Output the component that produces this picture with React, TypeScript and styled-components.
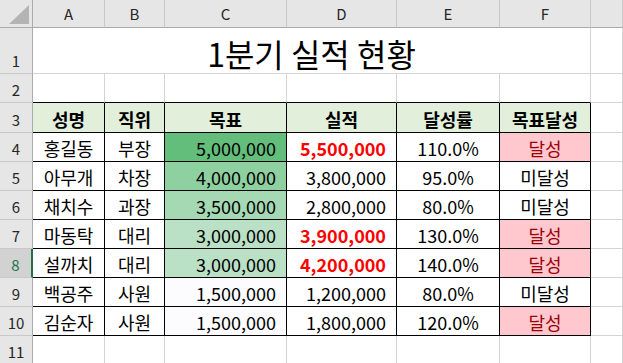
import React from 'react'
import styled, { createGlobalStyle } from 'styled-components'

const GlobalStyle = createGlobalStyle`
  html, body {
    margin: 0;
    padding: 0;
    background: #ffffff;
    overflow: hidden;
  }
  body {
    font-family: "Noto Sans CJK KR", "Noto Sans", sans-serif;
  }
`

const GRID = '#d4d4d4'
const HEAD_LINE = '#ababab'
const INK = '#000000'

const Sheet = styled.div`
  display: grid;
  grid-template-columns: 33px 72px 60px 122px 110px 103px 91px 1fr;
  grid-template-rows: 28px 46px 29px 30px repeat(7, 29px) 29px;
  width: 623px;
  height: 363px;
  overflow: hidden;
  font-family: "Noto Sans CJK KR", sans-serif;
`

const Corner = styled.div`
  background: #e6e6e6;
  border-right: 1px solid ${HEAD_LINE};
  border-bottom: 1px solid ${HEAD_LINE};
  box-sizing: border-box;
  display: flex;
  align-items: flex-end;
  justify-content: flex-end;
  padding: 0 3px 3px 0;
`

const ColHead = styled.div`
  background: #e6e6e6;
  border-right: 1px solid #c8c8c8;
  border-bottom: 1px solid ${HEAD_LINE};
  box-sizing: border-box;
  display: flex;
  align-items: center;
  justify-content: center;
  font-size: 15px;
  color: #262626;
  line-height: 1;
`

const RowHead = styled.div<{ $selected?: boolean }>`
  background: ${({ $selected }) => ($selected ? '#d2d2d2' : '#e6e6e6')};
  border-right: ${({ $selected }) => ($selected ? '2px solid #217346' : `1px solid ${HEAD_LINE}`)};
  border-bottom: 1px solid #c8c8c8;
  box-sizing: border-box;
  display: flex;
  align-items: flex-end;
  justify-content: center;
  padding-bottom: 5px;
  font-size: 15px;
  color: ${({ $selected }) => ($selected ? '#217346' : '#262626')};
  line-height: 1;
`

const Cell = styled.div<{
  $align?: 'left' | 'center' | 'right'
  $bg?: string
  $bold?: boolean
  $color?: string
  $rb?: string
  $bb?: string
}>`
  box-sizing: border-box;
  display: flex;
  align-items: center;
  justify-content: ${({ $align }) =>
    $align === 'right' ? 'flex-end' : $align === 'center' ? 'center' : 'flex-start'};
  padding: 2px 10px 0 4px;
  ${({ $align }) => ($align === 'center' ? 'padding-left: 0; padding-right: 0;' : '')}
  background: ${({ $bg }) => $bg || '#ffffff'};
  border-right: 1px solid ${({ $rb }) => $rb || GRID};
  border-bottom: 1px solid ${({ $bb }) => $bb || GRID};
  font-size: 18px;
  font-weight: ${({ $bold }) => ($bold ? 700 : 400)};
  color: ${({ $color }) => $color || INK};
  line-height: 1;
  white-space: nowrap;
`

const TitleCell = styled.div`
  grid-column: span 6;
  box-sizing: border-box;
  display: flex;
  align-items: flex-end;
  justify-content: center;
  padding-bottom: 4px;
  border-right: 1px solid ${GRID};
  border-bottom: 1px solid ${GRID};
  font-size: 32px;
  color: #000;
  line-height: 1;
`

const columns = ['A', 'B', 'C', 'D', 'E', 'F', '']

const staff = [
  { name: '홍길동', title: '부장', goal: 5000000, actual: 5500000 },
  { name: '아무개', title: '차장', goal: 4000000, actual: 3800000 },
  { name: '채치수', title: '과장', goal: 3500000, actual: 2800000 },
  { name: '마동탁', title: '대리', goal: 3000000, actual: 3900000 },
  { name: '설까치', title: '대리', goal: 3000000, actual: 4200000 },
  { name: '백공주', title: '사원', goal: 1500000, actual: 1200000 },
  { name: '김순자', title: '사원', goal: 1500000, actual: 1800000 },
]

const headers = ['성명', '직위', '목표', '실적', '달성률', '목표달성']

// two-colour scale, white (min) -> green (max), like Excel's
const scale = (v: number, min: number, max: number) => {
  const t = max === min ? 0 : (v - min) / (max - min)
  const lo = [252, 252, 255]
  const hi = [99, 190, 123]
  const c = lo.map((l, i) => Math.round(l + (hi[i] - l) * t))
  return `rgb(${c[0]}, ${c[1]}, ${c[2]})`
}

const fmt = (n: number) => n.toLocaleString('en-US')

function Corners() {
  return (
    <Corner>
      <svg width="20" height="19" viewBox="0 0 20 19">
        <polygon points="20,0 20,19 0,19" fill="#b4b4b4" />
      </svg>
    </Corner>
  )
}

export default function App() {
  const goals = staff.map(s => s.goal)
  const min = Math.min(...goals)
  const max = Math.max(...goals)
  // top 3 actuals get the red bold highlight
  const top3 = [...staff.map(s => s.actual)].sort((a, b) => b - a)[2]

  return (
    <>
      <GlobalStyle />
      <Sheet>
        <Corners />
        {columns.map((c, i) => (
          <ColHead key={i}>{c}</ColHead>
        ))}

        <RowHead>1</RowHead>
        <TitleCell>1분기 실적 현황</TitleCell>
        <Cell />

        <RowHead>2</RowHead>
        {headers.map((_, i) => (
          <Cell key={i} $bb={INK} />
        ))}
        <Cell />

        <RowHead>3</RowHead>
        {headers.map(h => (
          <Cell key={h} $align="center" $bold $bg="#e2efda" $rb={INK} $bb={INK}>
            {h}
          </Cell>
        ))}
        <Cell />

        {staff.map((s, i) => {
          const rate = (s.actual / s.goal) * 100
          const hit = s.actual >= s.goal
          const top = s.actual >= top3
          return (
            <React.Fragment key={s.name}>
              <RowHead $selected={i === 4}>{i + 4}</RowHead>
              <Cell $align="center" $rb={INK} $bb={INK}>{s.name}</Cell>
              <Cell $align="center" $rb={INK} $bb={INK}>{s.title}</Cell>
              <Cell $align="right" $rb={INK} $bb={INK} $bg={scale(s.goal, min, max)}>
                {fmt(s.goal)}
              </Cell>
              <Cell $align="right" $rb={INK} $bb={INK} $bold={top} $color={top ? '#ff0000' : INK}>
                {fmt(s.actual)}
              </Cell>
              <Cell $align="center" $rb={INK} $bb={INK}>{rate.toFixed(1)}%</Cell>
              <Cell
                $align="center"
                $rb={INK}
                $bb={INK}
                $bg={hit ? '#ffc7ce' : '#ffffff'}
                $color={hit ? '#9c0006' : INK}
              >
                {hit ? '달성' : '미달성'}
              </Cell>
              <Cell />
            </React.Fragment>
          )
        })}

        <RowHead>11</RowHead>
        {columns.map((_, i) => (
          <Cell key={i} />
        ))}
      </Sheet>
    </>
  )
}
